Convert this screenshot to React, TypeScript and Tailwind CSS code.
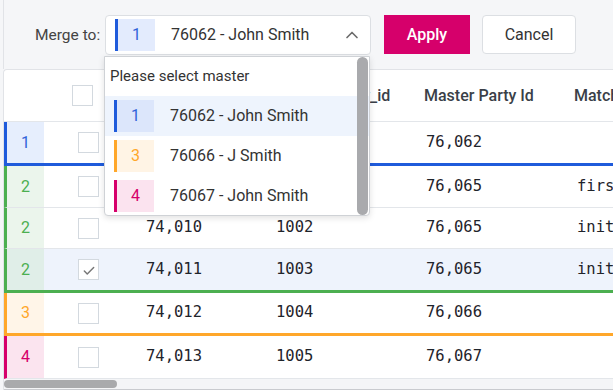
import { Check, ChevronUp } from 'lucide-react';

type Group = 'blue' | 'green' | 'orange' | 'pink';

const GROUP_STYLE: Record<Group, { bar: string; cell: string; text: string; end: string }> = {
  blue:   { bar: 'border-l-[#1f5bdb]', cell: 'bg-[#e6eefd]', text: 'text-[#2f62d9]', end: 'border-b-[3px] border-b-[#1f5bdb]' },
  green:  { bar: 'border-l-[#4caf50]', cell: 'bg-[#ebf5ec]', text: 'text-[#4caf50]', end: 'border-b-[3px] border-b-[#4caf50]' },
  orange: { bar: 'border-l-[#ffa72a]', cell: 'bg-[#fff5e8]', text: 'text-[#ffa72a]', end: 'border-b-[3px] border-b-[#ffa72a]' },
  pink:   { bar: 'border-l-[#d6006b]', cell: 'bg-[#fbe4ef]', text: 'text-[#d6006b]', end: 'border-b-[3px] border-b-[#ffffff]' },
};

// rows 1-2 have id / source cells hidden behind the open dropdown
const ROWS = [
  { idx: 1, group: 'blue' as Group,   h: 'h-[41px]', last: true,  id: '', src: '', master: '76,062', match: '' },
  { idx: 2, group: 'green' as Group,  h: 'h-[41px]', last: false, id: '', src: '', master: '76,065', match: 'first_name' },
  { idx: 2, group: 'green' as Group,  h: 'h-[40px]', last: false, id: '74,010', src: '1002', master: '76,065', match: 'initial' },
  { idx: 2, group: 'green' as Group,  h: 'h-[41px]', last: true,  id: '74,011', src: '1003', master: '76,065', match: 'initial', checked: true },
  { idx: 3, group: 'orange' as Group, h: 'h-[40px]', last: true,  id: '74,012', src: '1004', master: '76,066', match: '' },
  { idx: 4, group: 'pink' as Group,   h: 'h-[42px]', last: false, id: '74,013', src: '1005', master: '76,067', match: '' },
];

const OPTIONS = [
  { idx: 1, label: '76062 - John Smith', bar: 'bg-[#1f5bdb]', box: 'bg-[#dce6fb]', text: 'text-[#2f62d9]', row: 'bg-[#eef4fd]' },
  { idx: 3, label: '76066 - J Smith',    bar: 'bg-[#ffa72a]', box: 'bg-[#fff4e5]', text: 'text-[#ffa72a]', row: '' },
  { idx: 4, label: '76067 - John Smith', bar: 'bg-[#d6006b]', box: 'bg-[#fbe3ef]', text: 'text-[#d6006b]', row: '' },
];

const Checkbox = ({ checked = false }: { checked?: boolean }) => (
  <div className="w-[21px] h-[21px] border border-[#d3d9df] bg-white flex items-center justify-center">
    {checked && <Check size={14} strokeWidth={2.5} className="text-[#777] mt-[2px]" />}
  </div>
);

const Marker = ({ idx, bar, box, text }: { idx: number; bar: string; box: string; text: string }) => (
  <div className="flex items-center">
    <div className={`w-[3px] h-[32px] ${bar}`} />
    <div className={`w-[37px] h-[32px] flex items-center justify-center text-[16px] ${box} ${text}`}>{idx}</div>
  </div>
);

export default function App() {
  return (
    <div className="relative w-[613px] h-[390px] overflow-hidden bg-[#f5f6f8] font-['Roboto',sans-serif] text-[#333]">

      {/* ── Toolbar ── */}
      <div className="ml-[3px] border-l border-[#e1e3e7] h-[69px] flex items-start pt-[15px] pl-[31px]">
        <span className="w-[70px] leading-[40px] text-[15.5px] text-[#444]">Merge to:</span>
        <div className="w-[266px] h-[40px] bg-white border border-[#dcdfe3] rounded-[4px] flex items-center pl-[9px] pr-[8px]">
          <Marker idx={1} bar="bg-[#1f5bdb]" box="bg-[#e3ebfd]" text="text-[#2f62d9]" />
          <span className="ml-[16px] text-[16px] text-[#333] flex-1">76062 - John Smith</span>
          <ChevronUp size={20} strokeWidth={2} className="text-[#6b6b6b]" />
        </div>
        <button className="ml-[13px] w-[86px] h-[39px] bg-[#d6006b] text-white text-[16px] font-medium">Apply</button>
        <button className="ml-[12px] w-[94px] h-[39px] bg-white border border-[#dcdfe3] rounded-[4px] text-[16px] text-[#333]">Cancel</button>
      </div>

      {/* ── Table ── */}
      <div className="ml-[3px] w-[720px] bg-white border-t border-l border-[#e1e3e7] rounded-tl-[4px]">
        <div className="h-[52px] flex items-center border-b border-[#e3e6ea] text-[16px] font-medium text-[#3a3f48]">
          <div className="w-[40px]" />
          <div className="w-[87px] pl-[28px]"><Checkbox /></div>
          <div className="w-[130px]" />
          <div className="w-[150px] pl-[15px]">Source_party_id</div>
          <div className="w-[150px] pl-[13px]">Master Party Id</div>
          <div className="pl-[13px]">Match Rule</div>
        </div>

        {ROWS.map((r, i) => {
          const g = GROUP_STYLE[r.group];
          return (
            <div
              key={i}
              className={`flex items-stretch border-l-[3px] ${g.bar} ${r.last ? g.end : 'border-b border-b-[#e3e6ea]'} ${r.checked ? 'bg-[#eef3fc]' : 'bg-white'}`}
            >
              <div className={`${r.h} w-[37px] flex items-center justify-center text-[16px] ${r.checked ? 'bg-[#e0eee8]' : g.cell} ${g.text}`}>
                {r.idx}
              </div>
              <div className="w-[87px] pl-[34px] flex items-center"><Checkbox checked={r.checked} /></div>
              <div className="font-['DejaVu_Sans_Mono',monospace] text-[15.5px] text-[#1f242b] flex items-center">
                <div className="w-[130px] pl-[15px]">{r.id}</div>
                <div className="w-[150px] pl-[15px]">{r.src}</div>
                <div className="w-[150px] pl-[15px]">{r.master}</div>
                <div className="pl-[16px]">{r.match}</div>
              </div>
            </div>
          );
        })}

        <div className="h-[10px] bg-[#f4f5f7] pt-[1px]">
          <div className="w-[113px] h-[8px] rounded-full bg-[#a9aaac]" />
        </div>
        <div className="h-px bg-[#c9cbcf]" />
      </div>

      {/* ── Dropdown ── */}
      <div className="absolute left-[104px] top-[56px] w-[266px] h-[160px] bg-white border border-[#cfd2d6] rounded-b-[4px] shadow-[0_2px_6px_rgba(0,0,0,0.12)] overflow-hidden">
        <div className="h-[39px] pl-[5px] flex items-center text-[15px] text-[#333]">Please select master</div>
        {OPTIONS.map(o => (
          <div key={o.idx} className={`h-[40px] pl-[9px] pr-[12px] flex items-center ${o.row}`}>
            <Marker idx={o.idx} bar={o.bar} box={o.box} text={o.text} />
            <span className="ml-[16px] text-[16px] text-[#333]">{o.label}</span>
          </div>
        ))}
        <div className="absolute right-[1px] top-0 bottom-0 w-[11px] rounded-full bg-[#a9aaad]" />
      </div>
    </div>
  );
}
